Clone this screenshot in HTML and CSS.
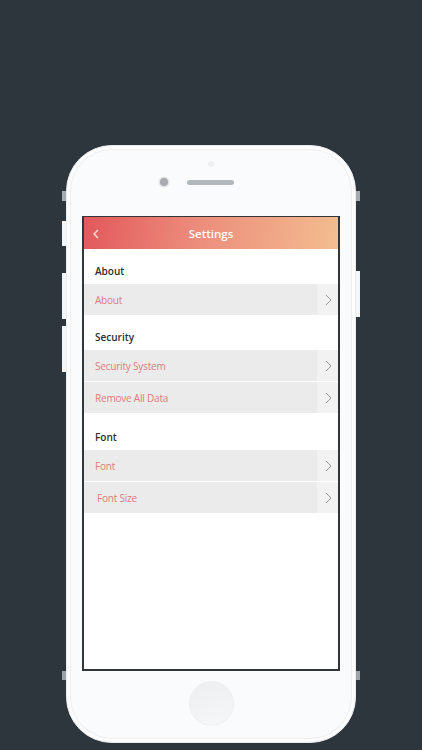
FILE: index.html
```html
<!DOCTYPE html>
<html>
<head>
<meta charset="utf-8">
<link rel="stylesheet" href="styles.css">
</head>
<body>
<div class="stage">
  <div class="phone">
    <span class="btn btn-l1"></span>
    <span class="btn btn-l2"></span>
    <span class="btn btn-l3"></span>
    <span class="btn btn-l4"></span>
    <span class="btn btn-r1"></span>
    <span class="btn btn-r2"></span>
    <span class="btn btn-lb"></span>
    <span class="btn btn-rb"></span>
    <div class="top">
      <span class="sensor"></span>
      <div class="cam-row">
        <span class="camera"></span>
        <span class="speaker"></span>
      </div>
    </div>
    <div class="screen">
      <div class="appbar">
        <svg class="back" width="8" height="10" viewBox="0 0 8 10"><polyline points="6,1 2,5 6,9" fill="none" stroke="#fbe3e0" stroke-width="1.4"/></svg>
        <span class="title">Settings</span>
      </div>
      <div class="section">About</div>
      <div class="rows">
        <div class="row"><span class="label">About</span><span class="arrow"><svg width="7" height="12" viewBox="0 0 7 12"><polyline points="1,1 6,6 1,11" fill="none" stroke="#9a9a9a" stroke-width="1"/></svg></span></div>
      </div>
      <div class="section">Security</div>
      <div class="rows">
        <div class="row"><span class="label">Security System</span><span class="arrow"><svg width="7" height="12" viewBox="0 0 7 12"><polyline points="1,1 6,6 1,11" fill="none" stroke="#9a9a9a" stroke-width="1"/></svg></span></div>
        <div class="row"><span class="label">Remove All Data</span><span class="arrow"><svg width="7" height="12" viewBox="0 0 7 12"><polyline points="1,1 6,6 1,11" fill="none" stroke="#9a9a9a" stroke-width="1"/></svg></span></div>
      </div>
      <div class="section section-font">Font</div>
      <div class="rows">
        <div class="row"><span class="label">Font</span><span class="arrow"><svg width="7" height="12" viewBox="0 0 7 12"><polyline points="1,1 6,6 1,11" fill="none" stroke="#9a9a9a" stroke-width="1"/></svg></span></div>
        <div class="row"><span class="label label-shift">Font Size</span><span class="arrow"><svg width="7" height="12" viewBox="0 0 7 12"><polyline points="1,1 6,6 1,11" fill="none" stroke="#9a9a9a" stroke-width="1"/></svg></span></div>
      </div>
    </div>
    <div class="bottom">
      <span class="home"></span>
    </div>
  </div>
</div>
</body>
</html>
```

FILE: styles.css
```css
* { box-sizing: border-box; }
html, body { margin: 0; padding: 0; }
body {
  width: 422px;
  height: 750px;
  overflow: hidden;
  background: #2d353d;
  font-family: "Open Sans", "Noto Sans", sans-serif;
}
.stage {
  display: flex;
  justify-content: center;
  padding-top: 145px;
}
.phone {
  position: relative;
  width: 290px;
  height: 598px;
  background: #fafbfc;
  border-radius: 46px;
  border: 1px solid #e9ebed;
  box-shadow: inset 0 0 0 3px #fdfdfe, inset 0 0 0 4px #eceef0;
  display: flex;
  flex-direction: column;
  align-items: center;
}
.btn {
  position: absolute;
  width: 4px;
  background: #f4f5f6;
}
.btn-l1 { left: -5px; top: 45px; height: 10px; background: #a8abae; }
.btn-l2 { left: -5px; top: 75px; height: 25px; }
.btn-l3 { left: -5px; top: 127px; height: 46px; }
.btn-l4 { left: -5px; top: 180px; height: 46px; }
.btn-r1 { right: -5px; top: 45px; height: 10px; background: #a8abae; }
.btn-r2 { right: -5px; top: 125px; height: 46px; }
.btn-lb { left: -5px; top: 525px; height: 9px; background: #9fa2a5; }
.btn-rb { right: -5px; top: 525px; height: 9px; background: #9fa2a5; }
.top {
  height: 70px;
  width: 100%;
  display: flex;
  flex-direction: column;
  align-items: center;
  padding-top: 15px;
}
.sensor {
  width: 6px;
  height: 6px;
  border-radius: 50%;
  background: #eef0f1;
}
.cam-row {
  display: flex;
  align-items: center;
  margin-top: 11px;
  margin-left: -28px;
}
.camera {
  width: 8px;
  height: 8px;
  border-radius: 50%;
  background: #a7abaf;
  box-shadow: 0 0 0 1.5px #e3e5e7;
}
.speaker {
  width: 47px;
  height: 5px;
  border-radius: 3px;
  background: #b3b8bd;
  margin-left: 19px;
}
.screen {
  width: 258px;
  height: 455px;
  border: 2px solid #333639;
  border-top-width: 1px;
  background: #ffffff;
  display: flex;
  flex-direction: column;
}
.appbar {
  height: 32px;
  flex: none;
  background: linear-gradient(100deg, #e2585b 0%, #ec8d7c 45%, #f3bd8f 100%);
  display: flex;
  align-items: center;
  justify-content: center;
  position: relative;
}
.back {
  position: absolute;
  left: 8px;
  top: 12px;
}
.title {
  color: #ffffff;
  font-size: 11.5px;
  font-weight: 600;
}
.section {
  height: 35px;
  flex: none;
  display: flex;
  align-items: center;
  padding-left: 11px;
  padding-top: 8px;
  font-size: 10px;
  font-weight: 600;
  color: #2e2e2e;
}
.section-font { height: 37px; padding-top: 10px; }
.rows {
  display: flex;
  flex-direction: column;
  gap: 1px;
}
.row {
  height: 31px;
  display: flex;
  align-items: center;
  background: #ebebeb;
}
.label {
  flex: 1;
  padding-left: 11px;
  font-size: 10px;
  letter-spacing: -0.2px;
  color: #dd7b7b;
}
.label-shift { padding-left: 13px; }
.arrow {
  width: 21px;
  height: 100%;
  background: #f2f2f2;
  display: flex;
  align-items: center;
  justify-content: center;
  padding-left: 2px;
}
.bottom {
  flex: 1;
  display: flex;
  align-items: center;
  justify-content: center;
  padding-bottom: 6px;
}
.home {
  width: 45px;
  height: 45px;
  border-radius: 50%;
  background: linear-gradient(160deg, #eceef0, #f6f7f8);
  border: 1px solid #edeff1;
}
```
